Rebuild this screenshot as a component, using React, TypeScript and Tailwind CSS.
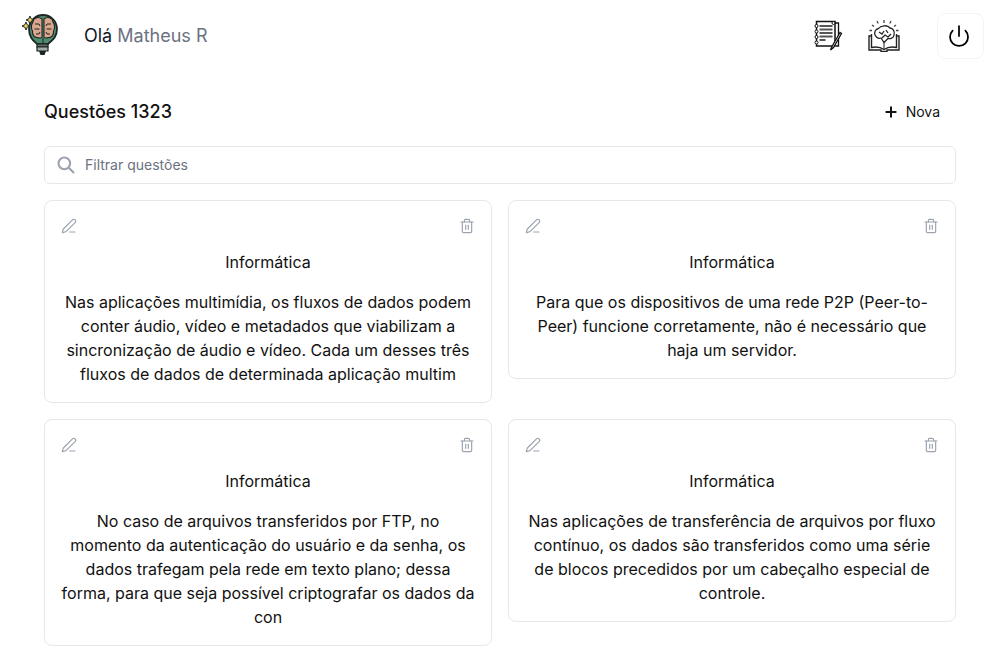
import { PenLine, Trash2, Plus, Power } from "lucide-react";

function Logo() {
  return (
    <svg width="38" height="43" viewBox="0 0 38 43" className="shrink-0">
      <path d="M17 30C14 27 9 24 9 15a14 14 0 0 1 28 0C37 24 31 27 28 30z" fill="#4f8c6f" stroke="#1c2624" strokeWidth="1.800" />
      <path d="M22 5C18 2 13 4 13 8c-2 2-2 7-.500 9-.500 4 2 7 5 6.500 2 1 4 .500 4.500-.500z" fill="#dca68e" stroke="#1c2624" strokeWidth="1.100" />
      <path d="M24 5c4-3 9-1 9 3 2 2 2 7 .500 9 .500 4-2 7-5 6.500-2 1-4 .500-4.500-.500z" fill="#dca68e" stroke="#1c2624" strokeWidth="1.100" />
      <path d="M15 10h4l1 2M14.500 15h5M16 20h3l1-2M31 10h-4l-1 2M31.500 15h-5M30 20h-3l-1-2" stroke="#1c2624" strokeWidth="1" fill="none" />
      <path d="M23 24v6" stroke="#1c2624" strokeWidth="1" />
      <path d="M17 30h11v3H17z" fill="#5f6b68" stroke="#1c2624" strokeWidth="1.200" />
      <path d="M17 33h11v4H17z" fill="#a3aaa8" stroke="#1c2624" strokeWidth="1.200" />
      <path d="M19 37h7l-1.500 4h-4z" fill="#1c2624" />
      <path d="M10 2l1.200 2.800 2.800 1.200-2.800 1.200-1.200 2.800-1.200-2.800-2.800-1.200 2.800-1.200z" fill="#f0d060" stroke="#1c2624" strokeWidth="1" />
      <path d="M6 8l1.200 2.800 2.800 1.200-2.800 1.200-1.200 2.800-1.200-2.800-2.800-1.200 2.800-1.200z" fill="#f0d060" stroke="#1c2624" strokeWidth="1" />
    </svg>
  );
}

function NotebookIcon() {
  return (
    <svg width="30" height="32" viewBox="0 0 30 32" fill="none" className="shrink-0">
      <path d="M21 3h3.500v23H22" stroke="#111" strokeWidth="1.300" />
      <rect x="2.500" y="1.500" width="18.500" height="24.500" fill="#fff" stroke="#111" strokeWidth="1.500" />
      <path d="M5.500 6h13M5.500 9.500h13M5.500 13h13M5.500 16.500h13M5.500 20h6" stroke="#555" strokeWidth="2" />
      <circle cx="2.500" cy="6" r="1.500" fill="#fff" stroke="#111" />
      <circle cx="2.500" cy="11.500" r="1.500" fill="#fff" stroke="#111" />
      <circle cx="2.500" cy="17" r="1.500" fill="#fff" stroke="#111" />
      <circle cx="2.500" cy="22.500" r="1.500" fill="#fff" stroke="#111" />
      <circle cx="19.500" cy="3" r="1.500" fill="#fff" stroke="#111" />
      <path d="M26 12.500l-8 14-1.500 3.500 3-2.500 8-14z" fill="#fff" stroke="#111" strokeWidth="1.300" />
    </svg>
  );
}

function BrainBookIcon() {
  return (
    <svg width="32" height="32" viewBox="0 0 32 32" fill="none" className="shrink-0">
      <path d="M3 16H1v14h12v1.500h6V30h12V16h-2" stroke="#222" strokeWidth="1.400" />
      <path d="M3.500 14v13.500c5-1 9.500 0 12.500 2 3-2 7.500-3 12.500-2V14" fill="#fff" stroke="#222" strokeWidth="1.400" />
      <path d="M16 22v7" stroke="#222" />
      <path d="M7 15c-1-3 .500-6 3.500-6.500 2-3 9-4 11.500-.500 3 0 5 3.500 4 7 0 3-4 4-6 3.500l-4 4-3-4.500c-3 1-5-1-6-3z" fill="#fff" stroke="#222" strokeWidth="1.300" />
      <path d="M11 12l3 2 2-3M14 18l3-3 3 2 3-3M18 10l2 3" stroke="#222" strokeWidth="1.300" />
      <path d="M16 0v3M9 1l1.200 2.500M23 1l-1.200 2.500M4 5l2 1.500M28 5l-2 1.500M1.500 10.500h2.500M30.500 10.500H28" stroke="#444" strokeWidth="1.300" />
    </svg>
  );
}

const rows = [
  "Nas aplicações multimídia, os fluxos de dados podem conter áudio, vídeo e metadados que viabilizam a sincronização de áudio e vídeo. Cada um desses três fluxos de dados de determinada aplicação multim",
  "Para que os dispositivos de uma rede P2P (Peer-to-Peer) funcione corretamente, não é necessário que haja um servidor.",
  "No caso de arquivos transferidos por FTP, no momento da autenticação do usuário e da senha, os dados trafegam pela rede em texto plano; dessa forma, para que seja possível criptografar os dados da con",
  "Nas aplicações de transferência de arquivos por fluxo contínuo, os dados são transferidos como uma série de blocos precedidos por um cabeçalho especial de controle.",
];

function Card({ text }: { text: string }) {
  return (
    <div className="rounded-lg border border-[#e5e7eb] bg-white px-4 pt-[17px] pb-4 text-center">
      <div className="flex items-center justify-between text-[#9ca3af]">
        <PenLine size={16} strokeWidth={1.75} />
        <Trash2 size={16} strokeWidth={1.75} />
      </div>
      <div className="mt-4 text-base leading-6 text-[#111111]">Informática</div>
      <p className="mt-4 text-base leading-6 text-[#111111]">{text}</p>
    </div>
  );
}

export default function App() {
  return (
    <div className="min-h-[652px] overflow-hidden bg-white font-['Inter',sans-serif]">
      <header className="flex h-[72px] items-start">
        <div className="ml-[20px] mt-[14px]"><Logo /></div>
        <div className="ml-[26px] mt-[22px] text-lg leading-7 text-[#111827]">
          Olá <span className="text-[#6b7280]">Matheus R</span>
        </div>
        <div className="ml-auto mt-[20px]"><NotebookIcon /></div>
        <div className="ml-[24px] mt-[20px]"><BrainBookIcon /></div>
        <button className="ml-[37px] mr-[17px] mt-[13px] flex h-[46px] w-[47px] items-center justify-center rounded-lg border border-[#f3f4f6] bg-white text-black">
          <Power size={24} strokeWidth={1.75} className="-ml-[3px]" />
        </button>
      </header>
      <main className="ml-[44px] w-[912px]">
        <div className="mt-[14px] flex h-[52px] items-center justify-between">
          <h1 className="text-lg font-medium text-[#111111]">Questões 1323</h1>
          <button className="mr-4 flex items-center gap-[7px] text-sm font-normal text-[#111111]">
            <Plus size={16} strokeWidth={3} />
            Nova
          </button>
        </div>
        <div className="mt-[8px] flex h-[38px] items-center rounded-md border border-[#e5e7eb] pl-[11px]">
          <svg width="20" height="20" viewBox="0 0 24 24" fill="none" stroke="#9ca3af" strokeWidth="2.500" strokeLinecap="round" strokeLinejoin="round">
            <path d="M21 21l-6-6m2-5a7 7 0 11-14 0 7 7 0 0114 0z" />
          </svg>
          <span className="ml-[9px] text-sm text-[#6b7280]">Filtrar questões</span>
        </div>
        <div className="mt-4 grid grid-cols-2 items-start gap-4">
          {rows.map((t) => <Card key={t} text={t} />)}
        </div>
      </main>
    </div>
  );
}
